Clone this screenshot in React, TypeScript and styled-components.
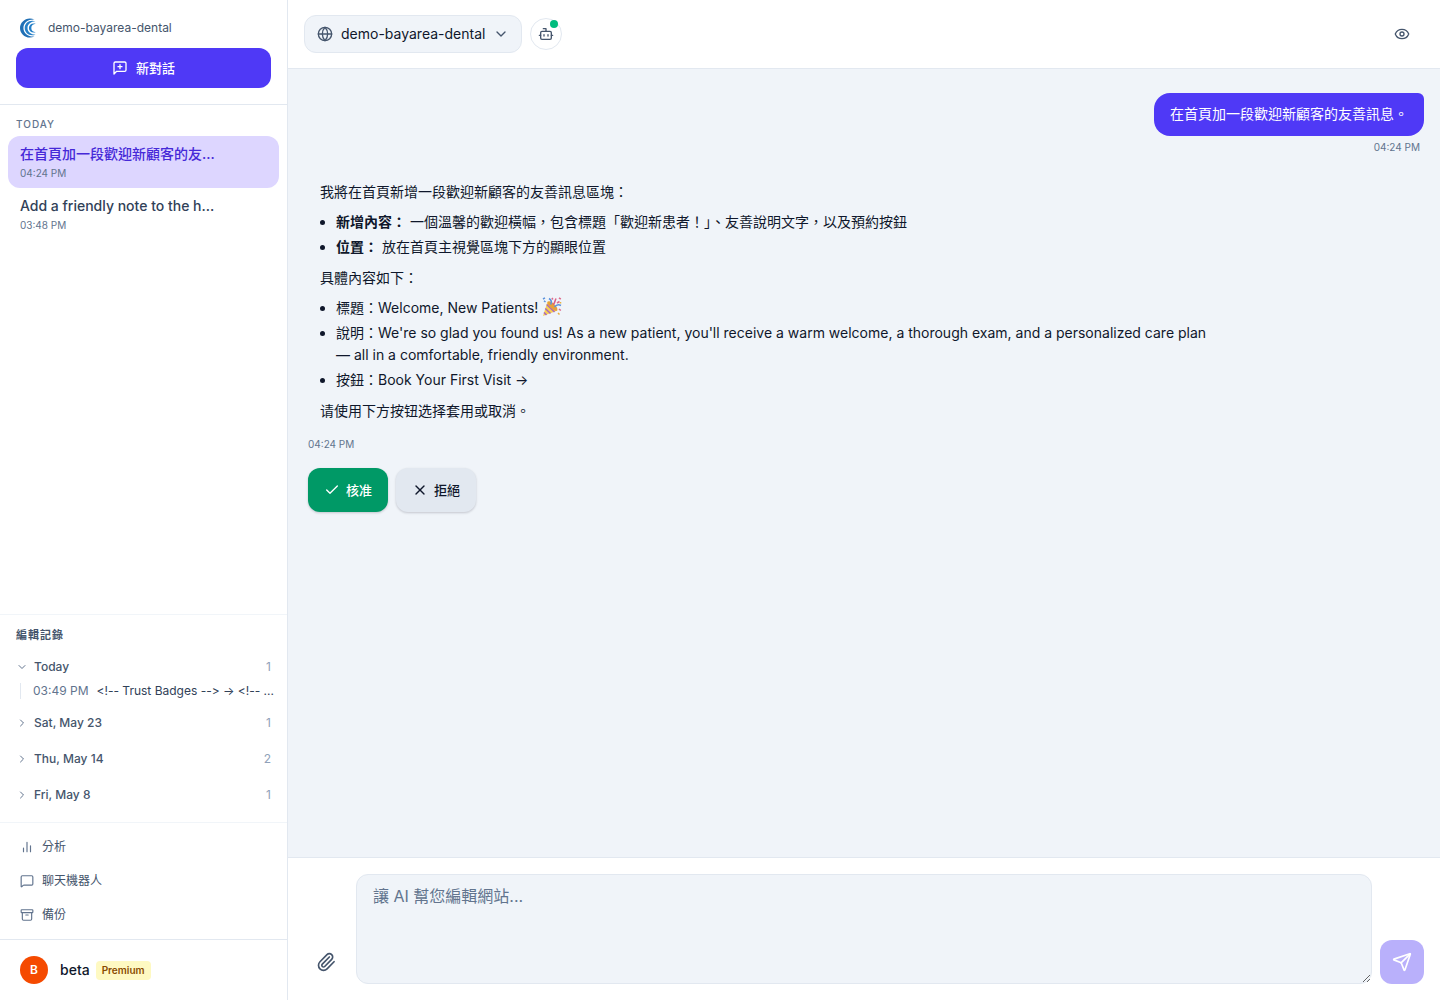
import React, { useState } from 'react';
import styled, { createGlobalStyle } from 'styled-components';
import {
  Archive,
  Bot,
  Check,
  ChevronDown,
  ChevronRight,
  Eye,
  Globe,
  MessageSquare,
  Paperclip,
  Send,
  X,
} from 'lucide-react';

const color = {
  accent: '#4f39f6',
  accentSoft: '#ddd6ff',
  accentDeep: '#4629d8',
  ink: '#0f172b',
  slate700: '#314158',
  slate600: '#45556c',
  slate500: '#62748e',
  slate400: '#90a1b9',
  line: '#e2e8f0',
  lineSoft: '#f1f5f9',
  canvas: '#f0f4f9',
};

const GlobalStyle = createGlobalStyle`
  * { box-sizing: border-box; }
  body {
    margin: 0;
    font-family: Inter, "Noto Sans CJK TC", "Noto Sans CJK SC", sans-serif;
    font-size: 14px;
    line-height: 20px;
    color: ${color.ink};
    background: #fff;
  }
  button, textarea { font: inherit; color: inherit; }
  button { border: 0; padding: 0; background: none; cursor: pointer; }
  a { color: inherit; text-decoration: none; }
  ul, p, h2 { margin: 0; padding: 0; }
  svg { flex-shrink: 0; display: block; }
`;

const Shell = styled.div`
  display: flex;
  height: 100vh;
`;

const Sidebar = styled.aside`
  display: flex;
  flex-direction: column;
  width: 288px;
  flex-shrink: 0;
  border-right: 1px solid ${color.line};
`;

const SidebarTop = styled.div`
  display: flex;
  flex-direction: column;
  gap: 8px;
  padding: 16px;
  border-bottom: 1px solid ${color.line};
`;

const SiteName = styled.div`
  display: flex;
  align-items: center;
  gap: 8px;
  height: 24px;
  padding: 0 4px;
  font-size: 12px;
  line-height: 16px;
  color: ${color.slate600};
`;

const NewChatButton = styled.button`
  display: flex;
  align-items: center;
  justify-content: center;
  gap: 8px;
  height: 40px;
  border-radius: 12px;
  background: ${color.accent};
  color: #fff;
  font-size: 13px;
  font-weight: 500;
`;

const Conversations = styled.nav`
  flex: 1;
  min-height: 0;
  overflow: auto;
  padding: 8px;
`;

const GroupLabel = styled.h2`
  padding: 4px 8px;
  font-size: 10px;
  line-height: 15px;
  font-weight: 500;
  letter-spacing: 1px;
  color: ${color.slate500};
`;

const Conversation = styled.a<{ $active?: boolean }>`
  display: flex;
  flex-direction: column;
  gap: 1px;
  height: 52px;
  padding: 8px 12px;
  border-radius: 12px;
  background: ${(p) => (p.$active ? color.accentSoft : 'transparent')};
  color: ${(p) => (p.$active ? color.accentDeep : color.slate700)};
  font-weight: 500;
`;

const Stamp = styled.time`
  font-size: 10px;
  line-height: 16px;
  font-weight: 400;
  color: ${color.slate500};
`;

const History = styled.section`
  padding: 8px 0 11px;
  border-top: 1px solid ${color.lineSoft};
`;

const HistoryTitle = styled.h2`
  padding: 4px 16px 8px;
  font-size: 11px;
  line-height: 16px;
  font-weight: 600;
  letter-spacing: 1px;
  color: ${color.slate600};
`;

const Day = styled.button`
  display: flex;
  align-items: center;
  gap: 6px;
  width: 100%;
  height: 32px;
  padding: 0 16px;
  font-size: 12px;
  color: ${color.slate600};
  font-weight: 500;
  text-align: left;
  svg { color: ${color.slate500}; }
`;

const Count = styled.span`
  margin-left: auto;
  font-weight: 400;
  color: ${color.slate400};
`;

const DayGroup = styled.div`
  & + & { margin-top: 4px; }
`;

const Edit = styled.div`
  display: flex;
  gap: 8px;
  margin: 0 8px 8px 20px;
  padding-left: 12px;
  border-left: 1px solid ${color.line};
  font-size: 12px;
  line-height: 16px;
  color: ${color.slate700};
  white-space: nowrap;
`;

const EditTime = styled.time`
  color: ${color.slate500};
`;

const EditText = styled.span`
  font-feature-settings: "calt" 0;
`;

const Tools = styled.nav`
  display: flex;
  flex-direction: column;
  padding: 7px 8px;
  border-top: 1px solid ${color.lineSoft};
`;

const Tool = styled.a`
  display: flex;
  align-items: center;
  gap: 8px;
  height: 34px;
  padding: 0 12px;
  font-size: 12px;
  color: ${color.slate600};
  svg { color: ${color.slate500}; }
`;

const Account = styled.div`
  display: flex;
  align-items: center;
  height: 61px;
  padding: 0 20px;
  border-top: 1px solid ${color.line};
  font-weight: 500;
`;

const Avatar = styled.span`
  display: grid;
  place-items: center;
  width: 28px;
  height: 28px;
  margin-right: 12px;
  border-radius: 50%;
  background: #f54a00;
  color: #fff;
  font-size: 12px;
  font-weight: 600;
`;

const Plan = styled.span`
  margin-left: 6px;
  padding: 2px 6px;
  border-radius: 4px;
  background: #fef9c2;
  color: #894b00;
  font-size: 10px;
  line-height: 15px;
  font-weight: 600;
`;

const Main = styled.main`
  display: flex;
  flex-direction: column;
  flex: 1;
  min-width: 0;
`;

const Header = styled.header`
  display: flex;
  align-items: center;
  gap: 8px;
  height: 69px;
  padding: 0 16px;
  border-bottom: 1px solid ${color.line};
`;

const SitePicker = styled.button`
  display: flex;
  align-items: center;
  gap: 8px;
  height: 38px;
  padding: 0 12px;
  border: 1px solid ${color.line};
  border-radius: 12px;
  background: ${color.canvas};
  svg { color: ${color.slate600}; }
`;

const BotButton = styled.button`
  position: relative;
  display: grid;
  place-items: center;
  width: 32px;
  height: 32px;
  border: 1px solid ${color.line};
  border-radius: 50%;
  color: ${color.slate600};
`;

const OnlineDot = styled.span`
  position: absolute;
  top: 1px;
  right: 3px;
  width: 8px;
  height: 8px;
  border-radius: 50%;
  background: #00bc7d;
`;

const IconButton = styled.button`
  display: grid;
  place-items: center;
  width: 44px;
  height: 44px;
  border-radius: 12px;
  color: ${color.slate600};
`;

const PreviewButton = styled(IconButton)`
  margin-left: auto;
`;

const Thread = styled.section`
  flex: 1;
  min-height: 0;
  overflow: auto;
  display: flex;
  flex-direction: column;
  padding: 24px 16px;
  background: ${color.canvas};
`;

const Outgoing = styled.article`
  display: flex;
  flex-direction: column;
  align-items: flex-end;
  gap: 3px;
`;

const Bubble = styled.p`
  padding: 9px 16px 11px;
  border-radius: 16px 6px 16px 16px;
  background: ${color.accent};
  color: #fff;
  line-height: 23px;
`;

const MessageStamp = styled(Stamp)`
  padding: 0 4px;
`;

const Incoming = styled.article`
  display: flex;
  flex-direction: column;
  max-width: 928px;
  margin-top: 16px;
`;

const Prose = styled.div`
  display: flex;
  flex-direction: column;
  gap: 8px;
  padding: 9px 16px 11px;
  margin-bottom: 3px;
  line-height: 23px;
`;

const Bullets = styled.ul`
  display: flex;
  flex-direction: column;
  gap: 3px;
  padding-left: 16px;
  line-height: 22px;
`;

const Strong = styled.strong`
  font-weight: 600;
`;

const Emoji = styled.svg`
  display: inline-block;
  vertical-align: -4px;
`;

const Actions = styled.div`
  display: flex;
  gap: 8px;
  padding: 0 4px;
  margin-top: 16px;
`;

const Decision = styled.button<{ $primary?: boolean }>`
  display: flex;
  align-items: center;
  gap: 6px;
  height: 44px;
  padding: 0 16px;
  border-radius: 12px;
  background: ${(p) => (p.$primary ? '#009966' : color.line)};
  color: ${(p) => (p.$primary ? '#fff' : color.ink)};
  font-size: 13px;
  font-weight: 500;
  box-shadow: 0 1px 3px rgba(15, 23, 43, 0.1), 0 1px 2px rgba(15, 23, 43, 0.1);
`;

const Composer = styled.form`
  display: flex;
  align-items: flex-end;
  gap: 8px;
  padding: 16px;
  border-top: 1px solid ${color.line};
`;

const Prompt = styled.textarea`
  flex: 1;
  min-width: 0;
  height: 110px;
  padding: 9px 16px;
  border: 1px solid ${color.line};
  border-radius: 12px;
  background: ${color.canvas};
  font-size: 16px;
  line-height: 24px;
  resize: vertical;
  outline: 0;
  &::placeholder { color: ${color.slate500}; opacity: 1; }
`;

const SendButton = styled(IconButton)`
  background: #b9b0fb;
  color: #fff;
`;

const Logo = () => (
  <svg width="20" height="20" viewBox="0 0 20 20" aria-hidden="true">
    <path d="M14.5 1.5C7 -2 0 3.500 0 10s7 12 14.500 8.500C8.500 19 3.400 15.500 3.400 10S8.500 1 14.500 1.500Z" fill="#1f6fb5" />
    <path d="M15.500 3.300C9.500 1.300 4.700 5 4.700 10s4.800 8.700 10.800 6.700C11 16.500 7.500 14 7.500 10S11 3.500 15.500 3.300Z" fill="#2680c8" />
    <path d="M15.800 5.800C12 4.600 8.900 6.700 8.900 10s3.100 5.400 6.900 4.200C13 13.800 11.300 12.500 11.300 10S13 6.200 15.800 5.800Z" fill="#2680c8" />
  </svg>
);

const NewChatIcon = () => (
  <svg width="16" height="16" viewBox="0 0 24 24" fill="none" stroke="currentColor" strokeWidth="2" strokeLinecap="round" strokeLinejoin="round" aria-hidden="true">
    <path d="M21 15a2 2 0 0 1-2 2H7l-4 4V5a2 2 0 0 1 2-2h14a2 2 0 0 1 2 2z" />
    <path d="M12 7v6M9 10h6" />
  </svg>
);

const BarsIcon = () => (
  <svg width="14" height="14" viewBox="0 0 24 24" fill="none" stroke="currentColor" strokeWidth="2" strokeLinecap="round" aria-hidden="true">
    <path d="M18 20V10M12 20V4M6 20v-6" />
  </svg>
);

const PartyPopper = () => (
  <Emoji width="20" height="20" viewBox="0 0 20 20" role="img" aria-label="🎉">
    <path d="M5.500 4.500 1 19 15.500 13.500Z" fill="#f7cf52" />
    <path d="M4.700 7.500 12.500 15M3.300 11.500 8.500 16.500M2 15.500 4.500 18" stroke="#a868bd" strokeWidth="1.600" />
    <ellipse cx="10.500" cy="9" rx="2.600" ry="6.400" transform="rotate(-46 10.500 9)" fill="#e6a03c" />
    <path d="M8.500 7.500c1.600-2 1-4.500-1.500-6M12.500 10c2-2.500 4-2.800 6.500-1.500" stroke="#5b93dd" strokeWidth="1.600" fill="none" />
    <path d="M11 7.500c2-1 1.500-3 3-6" stroke="#dd5f86" strokeWidth="1.600" fill="none" />
    <path d="M1 2 3 .8M3.500 5 2 3.700" stroke="#5b93dd" strokeWidth="1.500" />
    <path d="M10 1l.8 1.500M17 .8l1.800 1.400M15 6l2.500-1.500M17 12l1.800 1.500" stroke="#dd6a8c" strokeWidth="1.600" />
    <path d="M16 16l1.500 1.500M18.500 5v1.500" stroke="#e9b13e" strokeWidth="1.500" />
  </Emoji>
);

const days = [
  { label: 'Today', count: 1, edits: [{ time: '03:49 PM', text: '<!-- Trust Badges --> → <!-- ...' }] },
  { label: 'Sat, May 23', count: 1, edits: [] },
  { label: 'Thu, May 14', count: 2, edits: [] },
  { label: 'Fri, May 8', count: 1, edits: [] },
];

export default function App() {
  const [open, setOpen] = useState('Today');
  const [draft, setDraft] = useState('');

  return (
    <>
      <GlobalStyle />
      <Shell>
        <Sidebar>
          <SidebarTop>
            <SiteName><Logo />demo-bayarea-dental</SiteName>
            <NewChatButton type="button"><NewChatIcon />新對話</NewChatButton>
          </SidebarTop>
          <Conversations>
            <GroupLabel>TODAY</GroupLabel>
            <Conversation href="#chat-1" $active>
              在首頁加一段歡迎新顧客的友...
              <Stamp>04:24 PM</Stamp>
            </Conversation>
            <Conversation href="#chat-2">
              Add a friendly note to the h...
              <Stamp>03:48 PM</Stamp>
            </Conversation>
          </Conversations>
          <History>
            <HistoryTitle>編輯記錄</HistoryTitle>
            {days.map((day) => (
              <DayGroup key={day.label}>
                <Day type="button" aria-expanded={open === day.label} onClick={() => setOpen(open === day.label ? '' : day.label)}>
                  {open === day.label ? <ChevronDown size={12} /> : <ChevronRight size={12} />}
                  {day.label}
                  <Count>{day.count}</Count>
                </Day>
                {open === day.label && day.edits.map((edit) => (
                  <Edit key={edit.time}>
                    <EditTime>{edit.time}</EditTime>
                    <EditText>{edit.text}</EditText>
                  </Edit>
                ))}
              </DayGroup>
            ))}
          </History>
          <Tools>
            <Tool href="#analytics"><BarsIcon />分析</Tool>
            <Tool href="#chatbot"><MessageSquare size={14} />聊天機器人</Tool>
            <Tool href="#backup"><Archive size={14} />備份</Tool>
          </Tools>
          <Account>
            <Avatar>B</Avatar>
            beta
            <Plan>Premium</Plan>
          </Account>
        </Sidebar>
        <Main>
          <Header>
            <SitePicker type="button">
              <Globe size={16} />
              demo-bayarea-dental
              <ChevronDown size={16} />
            </SitePicker>
            <BotButton type="button" aria-label="Chatbot">
              <Bot size={16} />
              <OnlineDot />
            </BotButton>
            <PreviewButton type="button" aria-label="Preview"><Eye size={16} /></PreviewButton>
          </Header>
          <Thread>
            <Outgoing>
              <Bubble>在首頁加一段歡迎新顧客的友善訊息。</Bubble>
              <MessageStamp>04:24 PM</MessageStamp>
            </Outgoing>
            <Incoming>
              <Prose>
                <p>我將在首頁新增一段歡迎新顧客的友善訊息區塊：</p>
                <Bullets>
                  <li><Strong>新增內容：</Strong> 一個溫馨的歡迎橫幅，包含標題「歡迎新患者！」、友善說明文字，以及預約按鈕</li>
                  <li><Strong>位置：</Strong> 放在首頁主視覺區塊下方的顯眼位置</li>
                </Bullets>
                <p>具體內容如下：</p>
                <Bullets>
                  <li>標題：Welcome, New Patients! <PartyPopper /></li>
                  <li>說明：We're so glad you found us! As a new patient, you'll receive a warm welcome, a thorough exam, and a personalized care plan — all in a comfortable, friendly environment.</li>
                  <li>按鈕：Book Your First Visit →</li>
                </Bullets>
                <p>请使用下方按钮选择套用或取消。</p>
              </Prose>
              <MessageStamp>04:24 PM</MessageStamp>
              <Actions>
                <Decision type="button" $primary><Check size={16} />核准</Decision>
                <Decision type="button"><X size={16} />拒絕</Decision>
              </Actions>
            </Incoming>
          </Thread>
          <Composer onSubmit={(e: React.FormEvent) => e.preventDefault()}>
            <IconButton type="button" aria-label="Attach"><Paperclip size={20} /></IconButton>
            <Prompt aria-label="Message" placeholder="讓 AI 幫您編輯網站..." value={draft} onChange={(e) => setDraft(e.target.value)} />
            <SendButton type="submit" aria-label="Send"><Send size={20} /></SendButton>
          </Composer>
        </Main>
      </Shell>
    </>
  );
}
